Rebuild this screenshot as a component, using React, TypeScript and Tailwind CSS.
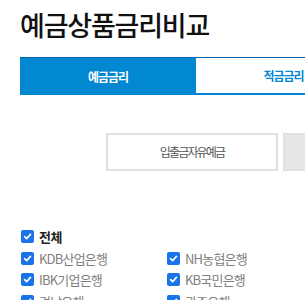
import React from 'react';

const banks: [string, string][] = [
  ['KDB산업은행', 'NH농협은행'],
  ['IBK기업은행', 'KB국민은행'],
  ['경남은행', '광주은행'],
];

const Check: React.FC<{ label: string; bold?: boolean }> = ({ label, bold }) => (
  <label className="flex items-center gap-[5px] h-[21.5px]">
    <span className="w-[13px] h-[13px] rounded-[2px] bg-[#1a73e8] flex items-center justify-center shrink-0">
      <svg width="9" height="9" viewBox="0 0 10 10">
        <path d="M1.8 5.2 L4 7.3 L8.3 2.6" stroke="#fff" strokeWidth="1.9" fill="none" strokeLinecap="round" strokeLinejoin="round" />
      </svg>
    </span>
    <span
      className={
        bold
          ? 'text-[13px] font-bold text-[#222] tracking-[-0.5px]'
          : 'text-[13px] text-[#808080] tracking-[-0.8px]'
      }
    >
      {label}
    </span>
  </label>
);

export default function App() {
  return (
    <div
      className="w-[305px] h-[300px] overflow-hidden bg-white"
      style={{ fontFamily: '"Noto Sans CJK KR", "Noto Sans", sans-serif' }}
    >
      <div className="w-[720px] pl-[20px]">
        {/* Title */}
        <h1 className="pt-[6px] h-[57px] text-[27px] font-medium text-[#111] tracking-[-1.2px] leading-[38px]">
          예금상품금리비교
        </h1>

        {/* Tabs */}
        <div className="flex w-[528px] h-[38px]">
          <div className="w-[176px] bg-[#0288d1] border-t border-[#0060a8] flex items-center justify-center text-white text-[12px] font-bold tracking-[-1px]">
            예금금리
          </div>
          <div className="w-[176px] bg-white border-t border-b-2 border-r border-t-[#0060a8] border-b-[#0288d1] border-r-[#ddd] flex items-center justify-center text-[#0288d1] text-[12px] font-bold tracking-[-1px]">
            적금금리
          </div>
          <div className="w-[176px] bg-white border-t border-b-2 border-t-[#0060a8] border-b-[#0288d1]" />
        </div>

        {/* Product type buttons */}
        <div className="flex gap-[5px] mt-[38px] ml-[86px]">
          <div className="w-[172px] h-[38px] border-2 border-[#e0e0e0] bg-white flex items-center justify-center text-[12px] text-[#555] tracking-[-1.8px]">
            입출금자유예금
          </div>
          <div className="w-[172px] h-[38px] border-2 border-[#e0e0e0] bg-[#e6e6e6]" />
        </div>

        {/* Banks */}
        <div className="mt-[55px] pl-[1px]">
          <Check label="전체" bold />
          {banks.map(([a, b]) => (
            <div key={a} className="flex">
              <div className="w-[146px]">
                <Check label={a} />
              </div>
              <Check label={b} />
            </div>
          ))}
        </div>
      </div>
    </div>
  );
}
